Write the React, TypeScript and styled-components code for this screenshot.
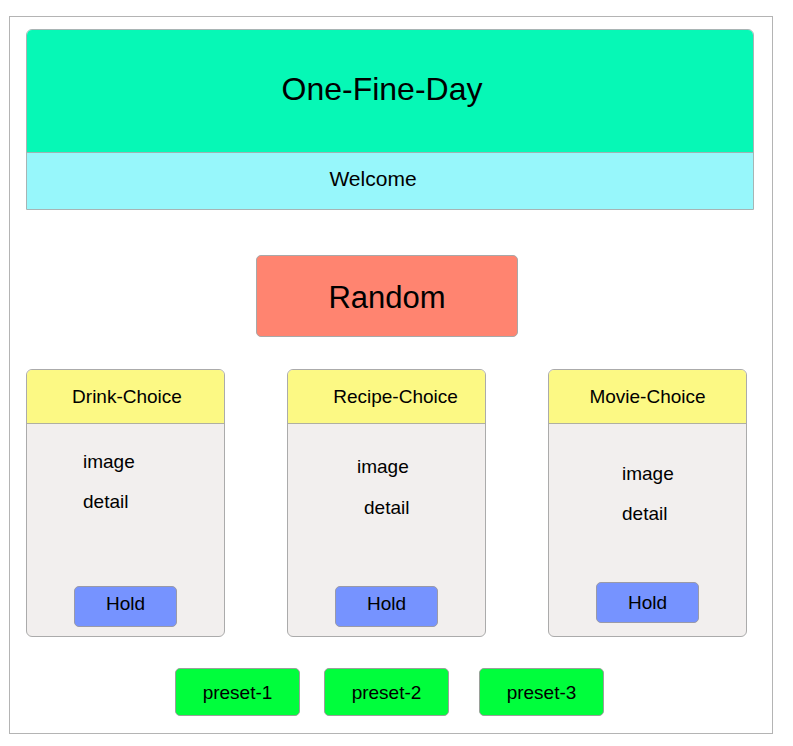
import React from "react";
import styled, { createGlobalStyle } from "styled-components";

const Global = createGlobalStyle`
  html, body { margin: 0; padding: 0; background: #ffffff; }
  body { font-family: "Liberation Sans", Arial, Helvetica, sans-serif; color: #000; }
  * { box-sizing: border-box; }
`;

const Frame = styled.div`
  margin: 16px 0 0 9px;
  width: 764px;
  height: 718px;
  border: 1px solid #b4b4b4;
  padding: 12px 18px 0 16px;
  display: flex;
  flex-direction: column;
  align-items: flex-start;
`;

const Header = styled.header`
  width: 728px;
  border: 1px solid #a8b4b4;
  border-radius: 6px 6px 0 0;
  overflow: hidden;
  display: flex;
  flex-direction: column;
`;

const TitleBar = styled.div`
  height: 123px;
  background: #06f8b6;
  border-bottom: 1px solid #9fb2b2;
  display: flex;
  align-items: center;
  justify-content: center;
  padding-right: 16px;
  padding-bottom: 4px;
  font-size: 32px;
`;

const WelcomeBar = styled.div`
  height: 56px;
  background: #97f7fb;
  display: flex;
  align-items: center;
  justify-content: center;
  padding-right: 34px;
  padding-bottom: 4px;
  font-size: 21px;
`;

const RandomButton = styled.div`
  margin: 45px 0 0 230px;
  width: 262px;
  height: 82px;
  background: #ff8470;
  border: 1px solid #a8a8a8;
  border-radius: 5px;
  display: flex;
  align-items: center;
  justify-content: center;
  padding-top: 3px;
  font-size: 31px;
`;

const CardRow = styled.div`
  margin-top: 32px;
  display: flex;
  gap: 62px;
`;

const Card = styled.section`
  width: 199px;
  height: 268px;
  border: 1px solid #ababab;
  border-radius: 6px;
  overflow: hidden;
  display: flex;
  flex-direction: column;
  background: #f2efee;
`;

const CardHeader = styled.div<{ $shift: number }>`
  height: 54px;
  background: #fcf984;
  border-bottom: 1px solid #b0b0a0;
  display: flex;
  align-items: center;
  justify-content: center;
  padding-left: ${(p) => p.$shift}px;
  padding-top: 1px;
  font-size: 19px;
`;

const CardBody = styled.div<{ $top: number; $bottom: number }>`
  flex: 1;
  display: flex;
  flex-direction: column;
  align-items: flex-start;
  padding-top: ${(p) => p.$top}px;
  padding-bottom: ${(p) => p.$bottom}px;
`;

const Line = styled.div<{ $indent: number; $gap?: number }>`
  font-size: 19px;
  line-height: 22px;
  margin-left: ${(p) => p.$indent}px;
  margin-top: ${(p) => p.$gap ?? 0}px;
`;

const HoldButton = styled.div<{ $lift: number }>`
  margin-top: auto;
  margin-left: 47px;
  width: 103px;
  height: 41px;
  background: #7693ff;
  border: 1px solid #9a9aa8;
  border-radius: 5px;
  display: flex;
  align-items: center;
  justify-content: center;
  padding-bottom: ${(p) => p.$lift}px;
  font-size: 19px;
`;

const PresetRow = styled.div`
  margin: 31px 0 0 149px;
  display: flex;
`;

const PresetButton = styled.div<{ $offset: number }>`
  margin-left: ${(p) => p.$offset}px;
  width: 125px;
  height: 48px;
  background: #00fe3c;
  border: 1px solid #9aa09a;
  border-radius: 5px;
  display: flex;
  align-items: center;
  justify-content: center;
  padding-top: 1px;
  font-size: 19px;
`;

type CardSpec = {
  title: string;
  shift: number;
  top: number;
  bottom: number;
  imageIndent: number;
  detailIndent: number;
  gap: number;
  lift: number;
};

const cards: CardSpec[] = [
  { title: "Drink-Choice", shift: 3, top: 27, bottom: 9, imageIndent: 56, detailIndent: 56, gap: 18, lift: 5 },
  { title: "Recipe-Choice", shift: 18, top: 32, bottom: 9, imageIndent: 69, detailIndent: 76, gap: 19, lift: 5 },
  { title: "Movie-Choice", shift: 0, top: 39, bottom: 13, imageIndent: 73, detailIndent: 73, gap: 18, lift: 0 },
];

const presets = [
  { label: "preset-1", offset: 0 },
  { label: "preset-2", offset: 24 },
  { label: "preset-3", offset: 30 },
];

export default function App() {
  return (
    <>
      <Global />
      <Frame>
        <Header>
          <TitleBar>One-Fine-Day</TitleBar>
          <WelcomeBar>Welcome</WelcomeBar>
        </Header>
        <RandomButton>Random</RandomButton>
        <CardRow>
          {cards.map((c) => (
            <Card key={c.title}>
              <CardHeader $shift={c.shift}>{c.title}</CardHeader>
              <CardBody $top={c.top} $bottom={c.bottom}>
                <Line $indent={c.imageIndent}>image</Line>
                <Line $indent={c.detailIndent} $gap={c.gap}>detail</Line>
                <HoldButton $lift={c.lift}>Hold</HoldButton>
              </CardBody>
            </Card>
          ))}
        </CardRow>
        <PresetRow>
          {presets.map((p) => (
            <PresetButton key={p.label} $offset={p.offset}>
              {p.label}
            </PresetButton>
          ))}
        </PresetRow>
      </Frame>
    </>
  );
}
